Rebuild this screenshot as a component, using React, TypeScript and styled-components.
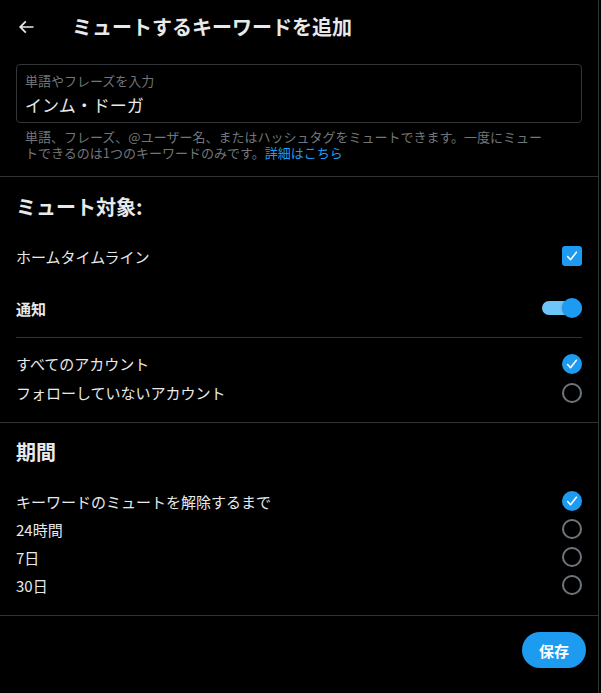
import React from 'react';
import styled, { createGlobalStyle } from 'styled-components';

const GlobalStyle = createGlobalStyle`
  html, body {
    margin: 0;
    padding: 0;
    background: #000;
  }
  body {
    font-family: "Noto Sans CJK JP", "Noto Sans", sans-serif;
    color: #e7e9ea;
  }
`;

const Page = styled.div`
  width: 598px;
  min-height: 693px;
  border-right: 1px solid #2f3336;
  background: #000;
`;

const Header = styled.div`
  display: flex;
  align-items: center;
  height: 53px;
  padding: 0 16px;
`;

const BackButton = styled.div`
  display: flex;
  align-items: center;
  width: 56px;
  height: 36px;
  color: #e7e9ea;
  cursor: pointer;
`;

const Title = styled.h2`
  margin: 0;
  font-size: 20px;
  line-height: 24px;
  font-weight: 700;
`;

const Section = styled.div<{ $pt?: number; $pb?: number }>`
  padding: ${(p) => p.$pt ?? 0}px 16px ${(p) => p.$pb ?? 0}px;
  border-bottom: 1px solid #2f3336;
`;

const Field = styled.label`
  display: flex;
  flex-direction: column;
  border: 1px solid #333639;
  border-radius: 4px;
  padding: 8px 8px 5px;
`;

const FieldLabel = styled.span`
  font-size: 13px;
  line-height: 16px;
  color: #71767b;
`;

const FieldValue = styled.span`
  margin-top: 4px;
  font-size: 17px;
  line-height: 24px;
  color: #e7e9ea;
`;

const Help = styled.p`
  margin: 6px 0 0;
  padding: 0 9px;
  max-width: 526px;
  font-size: 13px;
  line-height: 16px;
  color: #71767b;
`;

const Link = styled.a`
  color: #1d9bf0;
  text-decoration: none;
`;

const Heading = styled.h3<{ $mb: number }>`
  margin: 0 0 ${(p) => p.$mb}px;
  font-size: 20px;
  line-height: 24px;
  font-weight: 700;
`;

const Row = styled.div<{ $h: number; $bold?: boolean }>`
  display: flex;
  align-items: center;
  justify-content: space-between;
  height: ${(p) => p.$h}px;
  font-size: 15px;
  font-weight: ${(p) => (p.$bold ? 700 : 400)};
`;

const Rule = styled.div`
  height: 1px;
  background: #2f3336;
  margin: 3px 0 11px;
`;

const Checkbox = styled.span`
  display: flex;
  align-items: center;
  justify-content: center;
  width: 20px;
  height: 20px;
  border-radius: 3px;
  background: #1d9bf0;
`;

const Radio = styled.span<{ $on?: boolean }>`
  display: flex;
  align-items: center;
  justify-content: center;
  box-sizing: border-box;
  width: 20px;
  height: 20px;
  border-radius: 50%;
  background: ${(p) => (p.$on ? '#1d9bf0' : 'transparent')};
  border: ${(p) => (p.$on ? 'none' : '2px solid #6e767d')};
`;

const Switch = styled.span`
  display: flex;
  align-items: center;
  justify-content: flex-end;
  width: 40px;
  height: 14px;
  border-radius: 7px;
  background: #6ec6f8;
`;

const Knob = styled.span`
  width: 20px;
  height: 20px;
  border-radius: 50%;
  background: #1d9bf0;
  box-shadow: 0 0 2px rgba(0, 0, 0, 0.4);
`;

const Footer = styled.div`
  display: flex;
  justify-content: flex-end;
  padding: 16px 12px;
`;

const SaveButton = styled.button`
  width: 64px;
  height: 36px;
  border: none;
  border-radius: 9999px;
  background: #1d9bf0;
  color: #fff;
  font-family: inherit;
  font-size: 15px;
  font-weight: 700;
  cursor: pointer;
`;

const Check = () => (
  <svg width="14" height="14" viewBox="0 0 24 24" fill="none" stroke="#fff" strokeWidth="2.6" strokeLinecap="round" strokeLinejoin="round">
    <polyline points="4.5 13 9.5 18.5 19.5 5.5" />
  </svg>
);

const ArrowLeft = () => (
  <svg width="20" height="20" viewBox="0 0 24 24" fill="currentColor">
    <path d="M7.414 13l5.043 5.04-1.414 1.42L3.586 12l7.457-7.46 1.414 1.42L7.414 11H21v2H7.414z" />
  </svg>
);

const accounts = [
  { label: 'すべてのアカウント', on: true },
  { label: 'フォローしていないアカウント', on: false },
];

const durations = [
  { label: 'キーワードのミュートを解除するまで', on: true },
  { label: '24時間', on: false },
  { label: '7日', on: false },
  { label: '30日', on: false },
];

export default function App() {
  return (
    <>
      <GlobalStyle />
      <Page>
        <Header>
          <BackButton aria-label="戻る">
            <ArrowLeft />
          </BackButton>
          <Title>ミュートするキーワードを追加</Title>
        </Header>

        <Section $pt={11} $pb={15}>
          <Field>
            <FieldLabel>単語やフレーズを入力</FieldLabel>
            <FieldValue>インム・ドーガ</FieldValue>
          </Field>
          <Help>
            <span>
              単語、フレーズ、@ユーザー名、またはハッシュタグをミュートできます。一度にミュートできるのは1つのキーワードのみです。
            </span>
            <Link href="#">詳細はこちら</Link>
          </Help>
        </Section>

        <Section $pt={18} $pb={15}>
          <Heading $mb={11}>ミュート対象:</Heading>
          <Row $h={52}>
            ホームタイムライン
            <Checkbox>
              <Check />
            </Checkbox>
          </Row>
          <Row $h={52} $bold>
            通知
            <Switch>
              <Knob />
            </Switch>
          </Row>
          <Rule />
          {accounts.map((a) => (
            <Row key={a.label} $h={29}>
              {a.label}
              <Radio $on={a.on}>{a.on && <Check />}</Radio>
            </Row>
          ))}
        </Section>

        <Section $pt={17} $pb={16}>
          <Heading $mb={23}>期間</Heading>
          {durations.map((d) => (
            <Row key={d.label} $h={28}>
              {d.label}
              <Radio $on={d.on}>{d.on && <Check />}</Radio>
            </Row>
          ))}
        </Section>

        <Footer>
          <SaveButton>保存</SaveButton>
        </Footer>
      </Page>
    </>
  );
}
